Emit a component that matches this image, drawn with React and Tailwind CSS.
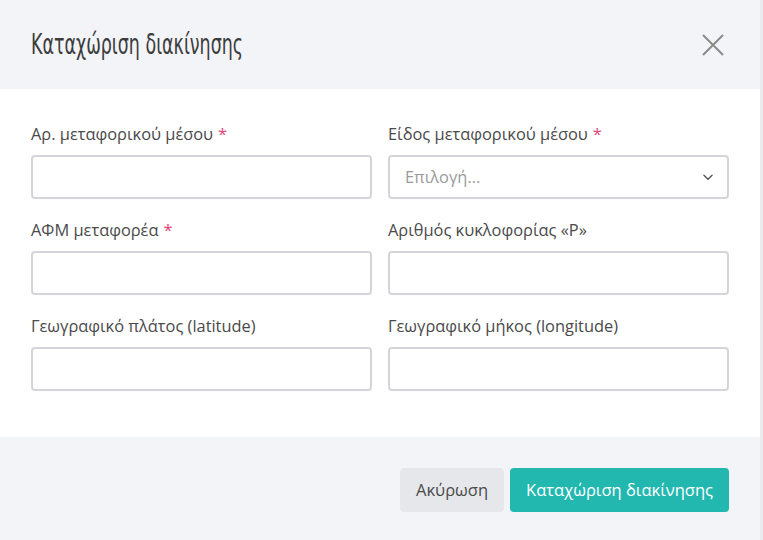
import React from "react";

const Field = ({ label, required, select }) => (
  <div className="flex flex-col">
    <label className="text-[16.4px] leading-[22px] text-[#4a4a4a] mb-[10px]">
      {label}
      {required && <span className="text-[#e2457a] ml-[5px]">*</span>}
    </label>
    {select ? (
      <div className="h-[44px] border-2 border-[#d5d5d9] rounded-[4px] flex items-center justify-between pl-[15px] pr-[12px] bg-white">
        <span className="text-[16.4px] text-[#9a9a9a]">Επιλογή...</span>
        <svg width="14" height="14" viewBox="0 0 24 24" fill="none" stroke="#555" strokeWidth="2.4" strokeLinecap="round" strokeLinejoin="round">
          <path d="M5 9l7 7 7-7" />
        </svg>
      </div>
    ) : (
      <input className="h-[44px] border-2 border-[#d5d5d9] rounded-[4px] px-3 outline-none bg-white" />
    )}
  </div>
);

export default function App() {
  return (
    <div className="flex w-[763px] h-[540px] bg-[#ebebed]" style={{ fontFamily: '"Open Sans", "Noto Sans", sans-serif' }}>
      <div className="w-[760px] h-full flex flex-col">
        <div className="h-[89px] bg-[#f3f4f8] flex items-center justify-between pl-[31px] pr-[36px]">
          <h2
            className="text-[29px] leading-none text-[#3c3c3c] origin-left scale-x-[0.67] whitespace-nowrap"
            style={{ fontFamily: '"DejaVu Sans Condensed", "Liberation Sans Narrow", sans-serif', fontWeight: 300 }}
          >
            Καταχώριση διακίνησης
          </h2>
          <svg width="22" height="22" viewBox="0 0 22 22" stroke="#8a8a8a" strokeWidth="2" fill="none">
            <path d="M1 1l20 20M21 1L1 21" />
          </svg>
        </div>
        <div className="bg-white flex-1 grid grid-cols-2 gap-x-[16px] gap-y-[20px] pl-[31px] pr-[31px] pt-[34px] pb-[46px] content-start">
          <Field label="Αρ. μεταφορικού μέσου" required />
          <Field label="Είδος μεταφορικού μέσου" required select />
          <Field label="ΑΦΜ μεταφορέα" required />
          <Field label="Αριθμός κυκλοφορίας «Ρ»" />
          <Field label="Γεωγραφικό πλάτος (latitude)" />
          <Field label="Γεωγραφικό μήκος (longitude)" />
        </div>
        <div className="h-[103px] bg-[#f3f4f8] flex items-start justify-end gap-[6px] pr-[31px] pt-[31px]">
          <button className="h-[44px] px-[16px] rounded-[4px] bg-[#e6e7ea] text-[#4a4a4a] text-[16.5px]">Ακύρωση</button>
          <button className="h-[44px] px-[16px] rounded-[4px] bg-[#22b8af] text-white text-[16.5px]">Καταχώριση διακίνησης</button>
        </div>
      </div>
      <div className="w-[3px] h-full bg-[#ebebed]" />
    </div>
  );
}
